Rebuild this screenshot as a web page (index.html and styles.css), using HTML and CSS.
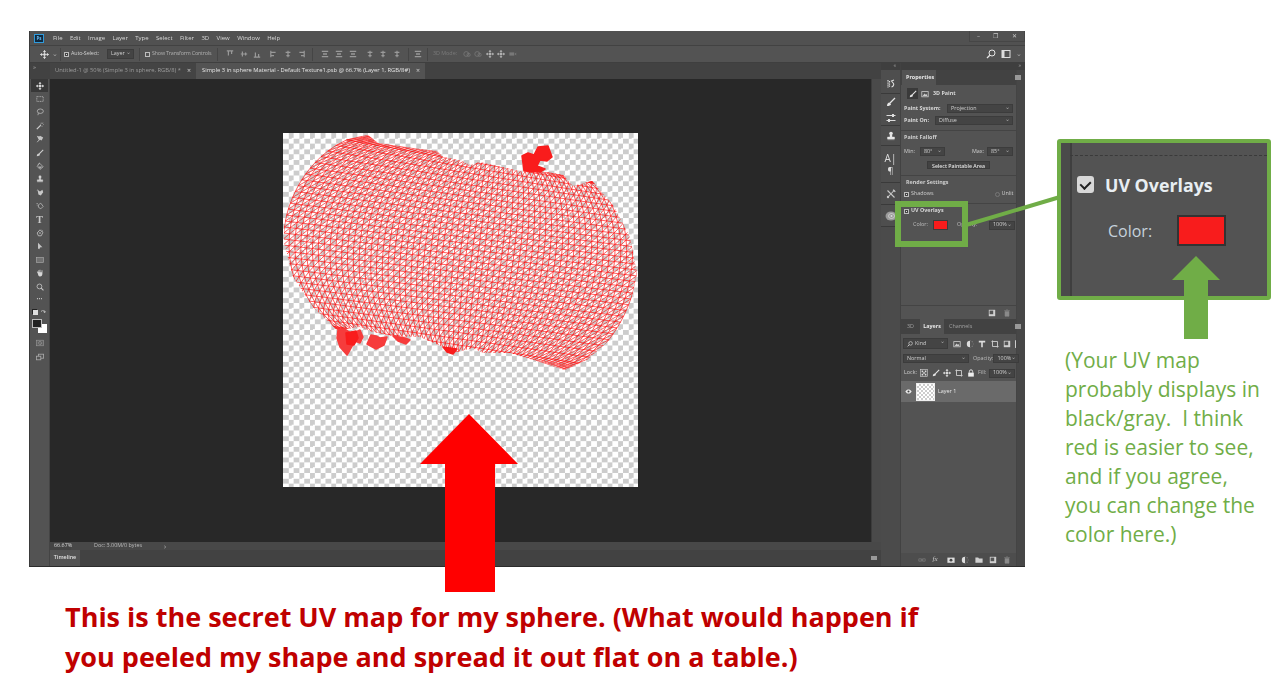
FILE: index.html
```html
<!DOCTYPE html>
<html lang="en">
<head>
<meta charset="utf-8">
<title>Secret UV map</title>
<link rel="stylesheet" href="styles.css">
</head>
<body>
<svg class="defs" aria-hidden="true">
  <symbol id="i-move" viewBox="0 0 10 10"><path d="M5 .5v9M.5 5h9M5 .5 3.8 2h2.4zM5 9.5 3.8 8h2.4zM.5 5 2 3.8v2.4zM9.5 5 8 3.8v2.4z" fill="#e0e0e0" stroke="#e0e0e0" stroke-width=".8"/><rect x="3.8" y="3.8" width="2.4" height="2.4" fill="#e0e0e0"/></symbol>
  <symbol id="i-marquee" viewBox="0 0 10 10"><rect x="1" y="2" width="8" height="6" fill="none" stroke="#ccc" stroke-dasharray="1.3 .8"/></symbol>
  <symbol id="i-lasso" viewBox="0 0 10 10"><ellipse cx="5.4" cy="4" rx="3.8" ry="2.8" fill="none" stroke="#ccc"/><path d="M3 6.5 2.4 9" stroke="#ccc" fill="none"/></symbol>
  <symbol id="i-wand" viewBox="0 0 10 10"><path d="M1 9 6 4" stroke="#e4e4e4" stroke-width="1.5"/><path d="M7.5 .5v2M7.5 4.5v1.5M5 3h1M9 3h1M5.5 1l.8.8M9 1l-.8.8" stroke="#ddd" stroke-width=".7"/></symbol>
  <symbol id="i-heal" viewBox="0 0 10 10"><path d="M1 1l3 1 1-1 4 2-2 4-2-1-1 1z" fill="#d8d8d8"/><path d="M4 6 1.5 9" stroke="#ddd"/></symbol>
  <symbol id="i-brush" viewBox="0 0 10 10"><path d="M9 1 4 6" stroke="#e6e6e6" stroke-width="1.3"/><path d="M1 9c0-2 1-3.500 2.500-3.500L5 7c0 1.500-2 2-4 2z" fill="#e6e6e6"/></symbol>
  <symbol id="i-bucket" viewBox="0 0 10 10"><path d="M4.500 1.500 9 6 5 9.200 1.500 5.500z" fill="none" stroke="#ccc"/><path d="M2 3.500 5 1" stroke="#ccc"/><path d="M2.500 5.500h5.500L5 8.500z" fill="#bbb"/></symbol>
  <symbol id="i-stamp" viewBox="0 0 10 10"><circle cx="5" cy="2.500" r="1.800" fill="#e6e6e6"/><path d="M4 4h2v2H4zM1.500 6h7v2h-7zM1.500 8.700h7" fill="#e6e6e6" stroke="#e6e6e6" stroke-width=".4"/></symbol>
  <symbol id="i-mix" viewBox="0 0 10 10"><path d="M2 1l3 2 3-2 1 3-3 4-3-1z" fill="#ddd"/><path d="M1 2h1M2 .5v1" stroke="#ddd" stroke-width=".6"/></symbol>
  <symbol id="i-smudge" viewBox="0 0 10 10"><path d="M3 3.500 6 1.500l3 4-3 3-3-2z" fill="none" stroke="#ccc"/><path d="M.5 2h2M1 4h1" stroke="#ccc" stroke-width=".8"/></symbol>
  <symbol id="i-pen" viewBox="0 0 10 10"><path d="M5 1 8.500 4.500 6.500 8.500H3L1.500 5z" fill="none" stroke="#ddd"/><circle cx="5" cy="5" r="1" fill="#ddd"/><path d="M7 1.500 8.800 3.200" stroke="#ddd"/></symbol>
  <symbol id="i-arrow" viewBox="0 0 10 10"><path d="M2.500 1 8 6.500H5.500L4 9 2.500 8z" fill="#d8d8d8"/></symbol>
  <symbol id="i-rect" viewBox="0 0 10 10"><rect x=".8" y="2" width="8.400" height="6" fill="#777" stroke="#bbb" stroke-width=".8"/></symbol>
  <symbol id="i-hand" viewBox="0 0 10 10"><path d="M2 5 1 3.500l1-.5 1 1V1.500h1V4h.5V1h1v3H7V1.500h1V6c0 2-1 3.500-3 3.500S3 8 2 5z" fill="#eee"/></symbol>
  <symbol id="i-zoom" viewBox="0 0 10 10"><circle cx="4.300" cy="4.300" r="3" fill="none" stroke="#ddd"/><path d="M6.500 6.500 9.300 9.300" stroke="#ddd" stroke-width="1.300"/></symbol>
  <symbol id="i-mask" viewBox="0 0 10 10"><rect x=".5" y="1.500" width="9" height="7" fill="#666" stroke="#aaa" stroke-width=".7"/><circle cx="5" cy="5" r="1.800" fill="none" stroke="#bbb" stroke-dasharray="1 .6"/></symbol>
  <symbol id="i-screen" viewBox="0 0 10 10"><rect x="3" y="1.500" width="6.500" height="5" fill="none" stroke="#bbb"/><rect x=".5" y="4" width="5.500" height="4.500" fill="#555" stroke="#bbb"/></symbol>
  <symbol id="i-al-t" viewBox="0 0 10 10"><path d="M1 1h8M3 1v6M7 1v4" stroke="#999" stroke-width="1.500"/></symbol>
  <symbol id="i-al-m" viewBox="0 0 10 10"><path d="M1 5h8M3 2v6M7 3v4" stroke="#999" stroke-width="1.500"/></symbol>
  <symbol id="i-al-b" viewBox="0 0 10 10"><path d="M1 9h8M3 3v6M7 5v4" stroke="#999" stroke-width="1.500"/></symbol>
  <symbol id="i-al-l" viewBox="0 0 10 10"><path d="M1 1v8M1 3h6M1 7h4" stroke="#999" stroke-width="1.500"/></symbol>
  <symbol id="i-al-c" viewBox="0 0 10 10"><path d="M5 1v8M2 3h6M3 7h4" stroke="#999" stroke-width="1.500"/></symbol>
  <symbol id="i-al-r" viewBox="0 0 10 10"><path d="M9 1v8M3 3h6M5 7h4" stroke="#999" stroke-width="1.500"/></symbol>
  <symbol id="i-dist" viewBox="0 0 10 10"><path d="M1 1h8v1.500H1zM1 7.500h8V9H1zM2.500 4h5v2h-5z" fill="#999"/></symbol>
  <symbol id="i-rot" viewBox="0 0 10 10"><circle cx="4" cy="5" r="3" fill="none" stroke="#888"/><circle cx="7" cy="6" r="2" fill="none" stroke="#888"/></symbol>
  <symbol id="i-cam" viewBox="0 0 10 10"><rect x=".5" y="3" width="6" height="4" fill="#888"/><path d="M7 5l2-2v4z" fill="#888"/></symbol>
  <symbol id="i-search" viewBox="0 0 10 10"><circle cx="6" cy="4" r="3" fill="none" stroke="#e6e6e6"/><path d="M3.800 6.200 1 9" stroke="#e6e6e6" stroke-width="1.300"/></symbol>
  <symbol id="i-work" viewBox="0 0 10 10"><rect x="1" y="1.500" width="8" height="7" fill="none" stroke="#ddd"/><rect x="1" y="1.500" width="2.500" height="7" fill="#ddd"/></symbol>
  <symbol id="i-image" viewBox="0 0 10 10"><rect x="1" y="2" width="8" height="6.500" fill="none" stroke="#ccc"/><path d="M2 7.500 4.500 4.500 6 6l1-1 1 2.500z" fill="#ccc"/></symbol>
  <symbol id="i-hist" viewBox="0 0 10 10"><path d="M2 1v8M3.500 2v6" stroke="#ddd" stroke-dasharray="1 .6" stroke-width="1.200"/><path d="M8 1 5.500 2l2 2.500c.8 1.500-.5 3-2 3.500" fill="none" stroke="#ddd" stroke-width="1.100"/></symbol>
  <symbol id="i-sliders" viewBox="0 0 10 10"><path d="M.5 2.500h9M.5 7.500h9" stroke="#ddd"/><rect x="6" y="1" width="2" height="3" fill="#ddd"/><rect x="2" y="6" width="2" height="3" fill="#ddd"/></symbol>
  <symbol id="i-tools" viewBox="0 0 10 10"><path d="M1.500 1.500 8.500 8.500M8.500 1 2.500 7.500" stroke="#c8c8c8" stroke-width="1.100"/><circle cx="2" cy="8" r="1.200" fill="#c8c8c8"/><path d="M7 .8 9.300 2.800" stroke="#c8c8c8" stroke-width="1.200"/></symbol>
  <symbol id="i-sphere" viewBox="0 0 12 10"><ellipse cx="6" cy="5" rx="5.500" ry="4.500" fill="#9a9a9a"/><ellipse cx="6.500" cy="5" rx="3" ry="2.500" fill="none" stroke="#ddd" stroke-width=".7"/><circle cx="6.500" cy="5" r="1" fill="#ddd"/></symbol>
  <symbol id="i-trash" viewBox="0 0 10 10"><path d="M2.500 3h5v6h-5zM1.500 2h7M4 1h2" fill="#8a8a8a" stroke="#8a8a8a" stroke-width=".7"/></symbol>
  <symbol id="i-new" viewBox="0 0 10 10"><rect x="1" y="1" width="8" height="8" fill="#d0d0d0"/><rect x="2" y="2" width="4.500" height="4.500" fill="#555"/></symbol>
  <symbol id="i-adj" viewBox="0 0 10 10"><circle cx="5" cy="5" r="4" fill="#ddd"/><path d="M5 1a4 4 0 0 1 0 8z" fill="#555"/></symbol>
  <symbol id="i-folder" viewBox="0 0 10 10"><path d="M.5 2h3.500l1 1h4.500v5.500H.5z" fill="#d0d0d0"/></symbol>
  <symbol id="i-maskb" viewBox="0 0 10 10"><rect x=".5" y="2" width="9" height="6.500" fill="#ddd"/><circle cx="5" cy="5.200" r="1.800" fill="#444"/></symbol>
  <symbol id="i-link" viewBox="0 0 10 10"><path d="M1 3.500h3.500v3H1zM5.500 3.500H9v3H5.500zM3 5h4" fill="none" stroke="#777"/></symbol>
  <symbol id="i-type" viewBox="0 0 10 10"><path d="M1 1h8v2H6v6H4V3H1z" fill="#ddd"/></symbol>
  <symbol id="i-crop" viewBox="0 0 10 10"><rect x="2" y="2" width="6" height="6" fill="none" stroke="#ddd" stroke-width="1"/><path d="M.5 2h1.500M8 8h1.500M2 .5V2M8 8v1.500" stroke="#ddd"/></symbol>
  <symbol id="i-lock" viewBox="0 0 10 10"><rect x="1.500" y="4.500" width="7" height="5" fill="#eee"/><path d="M3 4.500V3a2 2 0 0 1 4 0v1.500" fill="none" stroke="#eee" stroke-width="1.100"/></symbol>
  <symbol id="i-eye" viewBox="0 0 10 10"><path d="M.5 5C2 2.800 3.500 2 5 2s3 .8 4.500 3C8 7.200 6.500 8 5 8S2 7.200.5 5z" fill="#eee"/><circle cx="5" cy="5" r="1.500" fill="#444"/></symbol>
  <symbol id="i-checker" viewBox="0 0 10 10"><rect x=".5" y=".5" width="9" height="9" fill="#555" stroke="#ddd" stroke-width=".7"/><path d="M2 2h2v2H2zM6 2h2v2H6zM4 4h2v2H4zM2 6h2v2H2zM6 6h2v2H6z" fill="#ddd"/></symbol>
</svg>

<main class="page">
  <div class="ps">
    <header class="menubar">
      <span class="logo">Ps</span>
      <nav class="menus">
        <span>File</span><span>Edit</span><span>Image</span><span>Layer</span><span>Type</span><span>Select</span><span>Filter</span><span>3D</span><span>View</span><span>Window</span><span>Help</span>
      </nav>
      <div class="winbtns"><span class="winbtn">&#8211;</span><span class="winbtn">&#10064;</span><span class="winbtn wide">&#10005;</span></div>
    </header>

    <div class="options">
      <svg class="ic opt-move"><use href="#i-move"/></svg>
      <span class="chev opt-chev">&#8964;</span>
      <span class="vsep first"></span>
      <span class="chk on opt-chk"></span>
      <span class="opt-label auto">Auto-Select:</span>
      <span class="field opt-layer">Layer<i>&#8964;</i></span>
      <span class="vsep"></span>
      <span class="chk opt-chk"></span>
      <span class="opt-label dim show">Show Transform Controls</span>
      <span class="vsep"></span>
      <div class="opt-icons">
        <svg class="ic"><use href="#i-al-t"/></svg><svg class="ic"><use href="#i-al-m"/></svg><svg class="ic"><use href="#i-al-b"/></svg>
        <svg class="ic gapl"><use href="#i-al-l"/></svg><svg class="ic"><use href="#i-al-c"/></svg><svg class="ic"><use href="#i-al-r"/></svg>
      </div>
      <span class="vsep"></span>
      <div class="opt-icons">
        <svg class="ic"><use href="#i-dist"/></svg><svg class="ic"><use href="#i-dist"/></svg><svg class="ic"><use href="#i-dist"/></svg>
        <svg class="ic gapl"><use href="#i-al-c"/></svg><svg class="ic"><use href="#i-al-c"/></svg><svg class="ic"><use href="#i-al-c"/></svg>
      </div>
      <span class="vsep"></span>
      <svg class="ic"><use href="#i-dist"/></svg>
      <span class="vsep"></span>
      <span class="opt-label dim mode3d">3D Mode:</span>
      <div class="opt-icons tight">
        <svg class="ic"><use href="#i-rot"/></svg><svg class="ic"><use href="#i-rot"/></svg><svg class="ic"><use href="#i-move"/></svg><svg class="ic"><use href="#i-move"/></svg><svg class="ic"><use href="#i-cam"/></svg>
      </div>
      <div class="opt-right">
        <svg class="ic big"><use href="#i-search"/></svg>
        <svg class="ic big"><use href="#i-work"/></svg>
        <span class="chev">&#8964;</span>
      </div>
    </div>

    <div class="body">
      <div class="left">
        <div class="tabrow">
          <span class="grip">&#187;</span>
          <span class="doctab"><b>Untitled-1 @ 50% (Simple 3 in sphere, RGB/8) *</b><em>&#215;</em></span>
          <span class="doctab active"><b>Simple 3 in sphere Material - Default Texture1.psb @ 66.7% (Layer 1, RGB/8#)</b><em>&#215;</em></span>
        </div>
        <div class="work">
          <aside class="toolbar">
            <span class="tool active"><svg class="ic"><use href="#i-move"/></svg></span>
            <span class="tool"><svg class="ic"><use href="#i-marquee"/></svg></span>
            <span class="tool"><svg class="ic"><use href="#i-lasso"/></svg></span>
            <span class="tool"><svg class="ic"><use href="#i-wand"/></svg></span>
            <span class="tool"><svg class="ic"><use href="#i-heal"/></svg></span>
            <span class="tool"><svg class="ic"><use href="#i-brush"/></svg></span>
            <span class="tool"><svg class="ic"><use href="#i-bucket"/></svg></span>
            <span class="tool"><svg class="ic"><use href="#i-stamp"/></svg></span>
            <span class="tool"><svg class="ic"><use href="#i-mix"/></svg></span>
            <span class="tool"><svg class="ic"><use href="#i-smudge"/></svg></span>
            <span class="tool tool-t">T</span>
            <span class="tool"><svg class="ic"><use href="#i-pen"/></svg></span>
            <span class="tool"><svg class="ic"><use href="#i-arrow"/></svg></span>
            <span class="tool"><svg class="ic"><use href="#i-rect"/></svg></span>
            <span class="tool"><svg class="ic"><use href="#i-hand"/></svg></span>
            <span class="tool"><svg class="ic"><use href="#i-zoom"/></svg></span>
            <span class="tool tool-dots">&#8226;&#8226;&#8226;</span>
            <div class="swaps"><span class="mini-b"></span><span class="mini-a">&#8631;</span></div>
            <div class="colors"><span class="bgc"></span><span class="fgc"></span></div>
            <span class="tool low"><svg class="ic"><use href="#i-mask"/></svg></span>
            <span class="tool"><svg class="ic"><use href="#i-screen"/></svg></span>
          </aside>
          <div class="center">
            <div class="canvas-row">
              <div class="canvas">
                <div class="doc">
                  <svg class="mesh" viewBox="283 133 355 354" width="355" height="354">
                    <defs>
                      <clipPath id="mesh-clip">
                        <path d="M284 227 287 203 300 173 323 147 347 137 368 135 378 143 420 149 437 151 443 157 462 161 470 165 480 162 523 172 547 172 563 175 573 186 592 181 613 205 630 237 637 273 630 307 613 337 587 360 565 370 540 362 510 353 483 353 473 348 453 353 443 347 420 337 393 336 370 331 360 327 337 330 313 307 293 277 284 243Z"/>
                      </clipPath>
                    </defs>
                    <g clip-path="url(#mesh-clip)"><path id="mesh-lines" class="mesh-lines"/></g>
                    <path class="blob" d="M524 171 522 156 528 153 534 155 538 147 548 146 552 157 547 161 540 160 537 166 545 169 540 172Z"/>
                    <path class="blob soft" d="M338 330 345 329 352 334 360 330 363 337 360 343 355 341 350 350 347 355 340 347 337 338Z"/>
                    <path class="blob" d="M346 333 356 331 358 338 354 345 347 344Z"/>
                    <path class="blob soft" d="M367 344 371 335 376 336 380 338 387 337 384 345 376 349Z"/>
                    <path class="blob soft" d="M393 336 405 338 410 340 406 344 398 341Z"/>
                    <path class="blob" d="M443 347 457 349 453 354 447 352Z"/>
                  </svg>
                </div>
              </div>
              <div class="vscroll"></div>
            </div>
            <div class="status"><span class="zoomval">66.67%</span><span class="docinfo">Doc: 3.00M/0 bytes</span><span class="more">&#8250;</span></div>
            <div class="timeline"><span class="tl-tab">Timeline</span><span class="tl-menu"></span></div>
          </div>
        </div>
      </div>

      <aside class="dock">
        <div class="dock-top">&#171;</div>
        <div class="dgroup g1"><svg class="ic big"><use href="#i-hist"/></svg></div>
        <div class="dgroup g2"><svg class="ic big"><use href="#i-brush"/></svg><svg class="ic big"><use href="#i-sliders"/></svg></div>
        <div class="dgroup g3"><svg class="ic big"><use href="#i-stamp"/></svg></div>
        <div class="dgroup g4"><span class="dA">A|</span><span class="dP">&#182;</span></div>
        <div class="dgroup g5"><svg class="ic big"><use href="#i-tools"/></svg></div>
        <div class="dgroup g6"><svg class="ic wider"><use href="#i-sphere"/></svg></div>
      </aside>

      <div class="panels">
        <div class="panel-top">&#187;</div>
        <section class="panel props">
          <div class="ptabs"><span class="ptab">Properties</span><span class="pmenu"></span></div>
          <div class="prow mode-row">
            <span class="brushbtn"><svg class="ic"><use href="#i-brush"/></svg></span>
            <svg class="ic img"><use href="#i-image"/></svg>
            <span class="strong">3D Paint</span>
          </div>
          <div class="prow r-sys"><span class="strong">Paint System:</span><span class="field f-sys">Projection<i>&#8964;</i></span></div>
          <div class="prow r-on"><span class="strong">Paint On:</span><span class="field f-on">Diffuse<i>&#8964;</i></span></div>
          <hr class="rule r1">
          <div class="ptitle">Paint Falloff</div>
          <div class="prow r-minmax">
            <span>Min:</span><span class="field f-min">80&#176;<i>&#8964;</i></span>
            <span class="maxl">Max:</span><span class="field f-max">85&#176;<i>&#8964;</i></span>
          </div>
          <button class="pbtn">Select Paintable Area</button>
          <hr class="rule r2">
          <div class="ptitle t2">Render Settings</div>
          <div class="prow r-sh"><span class="chk on"></span><span class="lab">Shadows</span><span class="radio"></span><span>Unlit</span></div>
          <hr class="rule r3">
          <div class="prow r-uv"><span class="chk on"></span><span class="strong lab">UV Overlays</span></div>
          <div class="prow r-col"><span class="collab">Color:</span><span class="swatch"></span><span class="oplab">Opacity:</span><span class="field f-op">100%<i>&#8964;</i></span></div>
          <div class="pfoot">
            <svg class="ic"><use href="#i-new"/></svg><svg class="ic"><use href="#i-trash"/></svg>
          </div>
        </section>
        <section class="panel layers">
          <div class="ptabs"><span class="ltab">3D</span><span class="ptab lt">Layers</span><span class="ltab ch">Channels</span><span class="pmenu"></span></div>
          <div class="prow r-filter">
            <span class="field f-kind"><svg class="ic tiny"><use href="#i-search"/></svg>Kind<i>&#8964;</i></span>
            <div class="licons">
              <svg class="ic"><use href="#i-image"/></svg><svg class="ic"><use href="#i-adj"/></svg><svg class="ic"><use href="#i-type"/></svg><svg class="ic"><use href="#i-crop"/></svg><svg class="ic"><use href="#i-new"/></svg>
            </div>
            <span class="toggle"></span>
          </div>
          <div class="prow r-blend"><span class="field f-blend">Normal<i>&#8964;</i></span><span class="oplab2">Opacity:</span><span class="field f-pct">100%<i>&#8964;</i></span></div>
          <div class="prow r-lock">
            <span class="locklab">Lock:</span>
            <div class="licons small">
              <svg class="ic"><use href="#i-checker"/></svg><svg class="ic"><use href="#i-brush"/></svg><svg class="ic"><use href="#i-move"/></svg><svg class="ic"><use href="#i-crop"/></svg><svg class="ic"><use href="#i-lock"/></svg>
            </div>
            <span class="filllab">Fill:</span><span class="field f-pct">100%<i>&#8964;</i></span>
          </div>
          <div class="layer-row">
            <svg class="ic eye"><use href="#i-eye"/></svg>
            <span class="thumb"></span>
            <span>Layer 1</span>
          </div>
          <div class="lfoot">
            <svg class="ic"><use href="#i-link"/></svg><span class="fx"><i>fx</i></span><svg class="ic"><use href="#i-maskb"/></svg><svg class="ic"><use href="#i-adj"/></svg><svg class="ic"><use href="#i-folder"/></svg><svg class="ic"><use href="#i-new"/></svg><svg class="ic"><use href="#i-trash"/></svg>
          </div>
        </section>
      </div>
    </div>
  </div>

  <p class="caption">This is the secret UV map for my sphere. (What would happen if<br>you peeled my shape and spread it out flat on a table.)</p>

  <div class="callout"></div>
  <div class="inset">
    <div class="inset-row"><span class="inset-chk"></span><span class="inset-title">UV Overlays</span></div>
    <div class="inset-color"><span class="inset-lab">Color:</span><span class="inset-swatch"></span></div>
  </div>
  <svg class="arrows" viewBox="0 0 1275 684" width="1275" height="684" aria-hidden="true">
    <path class="a-green-line" d="M966 225 1060 197"/>
    <path class="a-green" d="M1196 256 1220 280H1208V339H1184V280H1172Z"/>
    <path class="a-red" d="M469 414 518 464H495V592H445V464H420Z"/>
  </svg>
  <p class="note">(Your UV map<br>probably displays in<br>black/gray.&nbsp; I think<br>red is easier to see,<br>and if you agree,<br>you can change the<br>color here.)</p>
</main>
<script src="script.js"></script>
</body>
</html>
```

FILE: styles.css
```css
* { box-sizing: border-box; }
html, body { margin: 0; padding: 0; background: #fff; }
body { font-family: "Open Sans", "Liberation Sans", sans-serif; overflow: hidden; }
.defs { position: absolute; width: 0; height: 0; }
.page { position: relative; width: 1275px; height: 684px; overflow: hidden; padding: 31px 0 0 29px; }

/* Photoshop window */
.ps { width: 996px; height: 536px; background: #535353; color: #cfcfcf; display: flex; flex-direction: column; font-size: 5.4px; line-height: 1; filter: blur(.4px); border-left: 1px solid #3a3a3a; border-bottom: 1px solid #2c2c2c; }
.ic { width: 8px; height: 8px; display: block; flex: none; }
.ic.big { width: 10px; height: 10px; }
.ic.tiny { width: 6px; height: 6px; margin-right: 2px; }
.ic.wider { width: 12px; height: 10px; }

.menubar { height: 15px; flex: none; display: flex; align-items: center; padding-left: 4px; border-bottom: 1px solid #424242; background: #515151; }
.logo { width: 10px; height: 9px; border: 1px solid #2f9bdc; background: #10293f; color: #6bbcf0; font-size: 4.5px; font-weight: 700; display: flex; align-items: center; justify-content: center; }
.menus { display: flex; gap: 7.4px; margin-left: 9px; font-size: 6px; color: #d8d8d8; }
.winbtns { margin-left: auto; height: 11px; display: flex; border: 1px solid #464646; border-top: 0; margin-top: -4px; margin-right: 0; color: #c8c8c8; }
.winbtn { width: 17px; display: flex; align-items: center; justify-content: center; font-size: 6px; }
.winbtn.wide { width: 20px; }

.options { height: 17px; flex: none; display: flex; align-items: center; padding-left: 10px; background: #535353; border-bottom: 1px solid #3f3f3f; }
.opt-move { width: 9px; height: 9px; }
.chev { color: #aaa; font-size: 7px; line-height: 5px; height: 6px; }
.opt-chev { margin-left: 3px; }
.vsep { width: 1px; height: 13px; background: #454545; flex: none; margin: 0 5px; }
.vsep.first { margin: 0 3px 0 2px; }
.chk { width: 5px; height: 5px; border: 1px solid #bdbdbd; flex: none; display: block; }
.chk.on { background: #e0e0e0; box-shadow: inset 0 0 0 1px #444; }
.opt-label.auto { margin-left: 2px; width: 30px; white-space: nowrap; letter-spacing: -.15px; }
.opt-label.dim, .dim { color: #b0b0b0; }
.opt-label.show { margin-left: 2px; width: 60px; white-space: nowrap; letter-spacing: -.2px; }
.opt-label.mode3d { color: #7a7a7a; white-space: nowrap; width: 25px; }
.field { background: #444; border: 1px solid #3c3c3c; display: flex; align-items: center; padding-left: 3px; height: 9px; position: relative; color: #d0d0d0; white-space: nowrap; flex: none; }
.field i { position: absolute; right: 2px; top: 0; font-style: normal; font-size: 6px; color: #aaa; line-height: 5px; }
.opt-layer { width: 27px; height: 10px; margin-left: 6px; }
.opt-icons { display: flex; gap: 5.700px; align-items: center; margin: 0 2px 0 3px; }
.opt-icons .gapl { margin-left: 3px; }
.opt-icons.tight { margin-left: 5px; gap: 3.500px; opacity: .7; }
.opt-right { margin-left: auto; display: flex; align-items: center; gap: 5px; margin-right: 3px; }

.body { flex: 1; display: flex; min-height: 0; }
.left { width: 851px; display: flex; flex-direction: column; flex: none; }
.tabrow { height: 16px; flex: none; display: flex; background: #424242; }
.grip { width: 20px; font-size: 6px; color: #aaa; padding: 1px 0 0 3px; flex: none; }
.doctab { height: 16px; display: flex; align-items: center; padding-left: 5px; width: 146px; background: #444; color: #9c9c9c; position: relative; flex: none; white-space: nowrap; font-size: 5.8px; }
.doctab b { font-weight: 400; }
.doctab em { position: absolute; right: 5px; top: 4px; font-style: normal; font-size: 7px; color: #ccc; }
.doctab.active { width: 229px; background: #535353; color: #e6e6e6; padding-left: 6px; }
.work { flex: 1; display: flex; min-height: 0; }
.toolbar { width: 20px; flex: none; background: #535353; border-right: 1px solid #444; display: flex; flex-direction: column; align-items: center; padding-top: 0; }
.tool { height: 13.400px; width: 17px; display: flex; align-items: center; justify-content: center; flex: none; color: #ddd; opacity: .85; }
.tool.active { background: #383838; opacity: 1; }
.tool-t { font-family: "Liberation Serif", serif; font-size: 10px; font-weight: 700; }
.tool-dots { font-size: 5px; letter-spacing: .2px; color: #ddd; }
.swaps { height: 11px; width: 17px; display: flex; justify-content: space-between; align-items: center; padding: 0 2px; flex: none; }
.mini-b { width: 5px; height: 5px; background: #ddd; box-shadow: -1px -1px 0 #222; }
.mini-a { font-size: 6px; color: #ddd; }
.colors { position: relative; width: 15px; height: 14px; flex: none; margin-top: 1px; }
.bgc { position: absolute; right: 0; bottom: 0; width: 9px; height: 9px; background: #fff; }
.fgc { position: absolute; left: 0; top: 0; width: 10px; height: 9.500px; background: #222; border: 1px solid #bbb; }
.tool.low { margin-top: 4px; }
.center { flex: 1; display: flex; flex-direction: column; min-width: 0; }
.canvas-row { flex: 1; display: flex; min-height: 0; }
.canvas { flex: 1; background: #282828; display: flex; align-items: center; justify-content: center; padding-bottom: 1px; }
.doc { width: 355px; height: 354px; background-color: #fff; background-image: conic-gradient(#ccc 25%, #fff 0 50%, #ccc 0 75%, #fff 0); background-size: 10.640px 10.640px; }
.mesh { display: block; }
.mesh-lines { fill: none; stroke: #ff1010; stroke-width: .8; stroke-opacity: .85; }
.blob { fill: #f91c1c; stroke: #f91c1c; stroke-width: 1.500; stroke-linejoin: round; }
.blob.soft { fill: #f63c3c; stroke: #f63c3c; }
.vscroll { width: 10px; flex: none; background: #4a4a4a; border-left: 1px solid #3c3c3c; }
.status { height: 8px; flex: none; display: flex; align-items: center; background: #484848; color: #bcbcbc; padding-right: 8px; }
.zoomval { width: 21px; padding-left: 4px; height: 8px; display: flex; align-items: center; background: #444; color: #ddd; white-space: nowrap; flex: none; }
.docinfo { margin-left: 23px; width: 70px; white-space: nowrap; }
.more { font-size: 7px; }
.timeline { height: 16px; flex: none; display: flex; align-items: center; background: #424242; }
.tl-tab { width: 30px; height: 16px; background: #535353; color: #e4e4e4; display: flex; align-items: center; justify-content: center; font-weight: 600; }
.tl-menu { margin-left: auto; margin-right: 4px; width: 6px; height: 4px; background: #999; }

.dock { width: 20px; flex: none; background: #4b4b4b; display: flex; flex-direction: column; align-items: stretch; border-right: 1px solid #424242; }
.dock-top { height: 7px; background: #3f3f3f; font-size: 5px; color: #aaa; text-align: right; padding-right: 4px; }
.dgroup { display: flex; flex-direction: column; align-items: center; border-bottom: 1px solid #3a3a3a; background: #4e4e4e; }
.g1 { height: 24px; justify-content: center; padding-top: 4px; }
.g2 { height: 32px; gap: 6px; justify-content: center; }
.g3 { height: 20px; justify-content: center; }
.g4 { height: 37px; justify-content: center; gap: 3px; }
.g5 { height: 22px; justify-content: center; }
.g6 { height: 22px; justify-content: center; }
.dA { font-size: 10px; color: #ddd; }
.dP { font-size: 9px; color: #ddd; }

.panels { flex: 1; display: flex; flex-direction: column; min-width: 0; background: #474747; }
.panel-top { height: 7px; flex: none; background: #3f3f3f; font-size: 5px; color: #aaa; text-align: right; padding-right: 4px; }
.panel { display: flex; flex-direction: column; width: 116px; background: #535353; border-right: 1px solid #444; }
.props { height: 249px; flex: none; }
.layers { flex: 1; }
.ptabs { height: 15px; flex: none; background: #424242; display: flex; align-items: stretch; padding-left: 1px; position: relative; }
.ptab { background: #535353; display: flex; align-items: center; padding: 0 4px; color: #e8e8e8; font-weight: 700; width: 34px; white-space: nowrap; }
.pmenu { position: absolute; right: -5px; top: 5px; width: 6px; height: 5px; background: #999; }
.prow { display: flex; align-items: center; padding-left: 3px; flex: none; white-space: nowrap; }
.strong { font-weight: 700; color: #d8d8d8; }
.mode-row { height: 11px; margin-top: 3px; padding-left: 6px; }
.brushbtn { width: 11px; height: 11px; background: #3a3a3a; display: flex; align-items: center; justify-content: center; }
.img { margin-left: 3px; }
.mode-row .strong { margin-left: 4px; }
.r-sys { height: 9px; margin-top: 5px; }
.f-sys { width: 66px; margin-left: auto; margin-right: 3px; }
.r-on { height: 9px; margin-top: 3px; }
.f-on { width: 78px; margin-left: auto; margin-right: 3px; }
.rule { border: 0; border-top: 1px solid #444; margin: 0; flex: none; }
.r1 { margin-top: 5px; }
.ptitle { height: 10px; margin-top: 2px; padding-left: 3px; font-weight: 700; display: flex; align-items: center; flex: none; }
.t2 { padding-left: 5px; }
.r-minmax { height: 9px; margin-top: 4px; }
.f-min { width: 25px; margin-left: 5px; }
.maxl { margin-left: auto; }
.f-max { width: 26px; margin-left: 3px; margin-right: 3px; }
.pbtn { display: block; width: 63px; height: 8px; margin: 5px 0 0 26px; padding: 0; background: #424242; border: 1px solid #3a3a3a; color: #e0e0e0; font: 600 5.200px "Open Sans", sans-serif; flex: none; white-space: nowrap; }
.r2 { margin-top: 6px; }
.r-sh { height: 8px; margin-top: 2px; }
.lab { margin-left: 2px; }
.radio { width: 5px; height: 5px; border: 1px solid #777; border-radius: 50%; margin-left: 61px; margin-right: 2px; }
.r3 { margin-top: 5px; }
.r-uv { height: 8px; margin-top: 3px; }
.r-col { height: 10px; margin-top: 5px; }
.collab { margin-left: 9px; width: 20px; color: #bdbdbd; }
.swatch { width: 15px; height: 10px; background: #f81c1c; border: 1px solid #3c3c3c; }
.oplab { margin-left: 9px; width: 32px; color: #bdbdbd; }
.f-op { width: 26px; }
.pfoot { margin-top: auto; height: 14px; flex: none; display: flex; align-items: center; justify-content: flex-end; gap: 7px; padding-right: 5px; border-top: 1px solid #444; }

.ltab { display: flex; align-items: center; color: #a0a0a0; padding: 0 5px 0 5px; width: 18px; }
.ptab.lt { width: 24px; justify-content: center; padding: 0; }
.ltab.ch { width: 36px; }
.r-filter { height: 11px; margin-top: 4px; padding-left: 2px; }
.f-kind { width: 45px; height: 11px; }
.licons { display: flex; align-items: center; gap: 4.600px; margin-left: 5px; }
.toggle { width: 3px; height: 8px; background: #ccc; border-radius: 2px; margin-left: 4px; }
.r-blend { height: 9px; margin-top: 5px; padding-left: 2px; }
.f-blend { width: 66px; }
.oplab2 { margin-left: 4px; width: 22px; color: #bdbdbd; }
.f-pct { width: 26px; }
.r-lock { height: 10px; margin-top: 5px; }
.locklab { width: 16px; }
.licons.small { gap: 3.700px; margin-left: 0; width: 58px; }
.filllab { width: 11px; margin-left: 0; color: #bdbdbd; }
.layer-row { height: 21px; margin-top: 3px; flex: none; background: #6a6a6a; display: flex; align-items: center; padding-left: 4px; gap: 3px; color: #e8e8e8; }
.eye { width: 7px; height: 7px; margin-right: 1px; }
.thumb { width: 19px; height: 18px; border: 1px solid #eee; background-color: #fff; background-image: conic-gradient(#ccc 25%, #fff 0 50%, #ccc 0 75%, #fff 0); background-size: 4px 4px; }
.lfoot { margin-top: auto; height: 13px; flex: none; display: flex; align-items: center; justify-content: flex-end; gap: 6.100px; padding-right: 5px; background: #4d4d4d; }
.fx { width: 8px; color: #ccc; font-size: 7px; font-family: "Liberation Serif", serif; }

/* annotations */
.caption { margin: 30px 0 0 36px; color: #c00000; font-size: 27px; font-weight: 700; line-height: 40px; white-space: nowrap; }
.note { position: absolute; left: 1065px; top: 346px; margin: 0; color: #70ad47; font-size: 21px; line-height: 29px; white-space: nowrap; }
.callout { position: absolute; left: 895px; top: 201px; width: 73px; height: 46px; border: 6px solid #70ad47; }
.inset { position: absolute; left: 1057px; top: 139px; width: 214px; height: 161px; background: #535353; border: 4px solid #70ad47; border-radius: 3px; padding: 32px 0 0 16px; color: #ddd; }
.inset::before { content: ""; position: absolute; left: 0; top: 0; bottom: 0; width: 9px; border-right: 2px solid #3f3f3f; background: #4a4a4a; }
.inset::after { content: ""; position: absolute; left: 9px; right: 0; top: 12px; border-top: 1px dashed #3a3a3a; }
.inset-row { display: flex; align-items: center; height: 18px; }
.inset-chk { width: 17px; height: 17px; border-radius: 3px; background: #d8d8d8; position: relative; flex: none; }
.inset-chk::after { content: ""; position: absolute; left: 5px; top: 3px; width: 5px; height: 8px; border: solid #222; border-width: 0 2px 2px 0; transform: rotate(45deg); }
.inset-title { margin-left: 11px; font-size: 17.800px; font-weight: 700; color: #e8eef2; line-height: 18px; position: relative; top: 1px; }
.inset-color { display: flex; align-items: center; margin: 22px 0 0 31px; }
.inset-lab { width: 69px; font-size: 16px; color: #c6d2dc; }
.inset-swatch { width: 49px; height: 31px; background: #f81c1c; border: 2px solid #333; flex: none; }
.arrows { position: absolute; left: 0; top: 0; pointer-events: none; }
.a-green { fill: #70ad47; }
.a-green-line { stroke: #70ad47; stroke-width: 4; fill: none; }
.a-red { fill: #ff0000; }
```

FILE: script.js
```js
// Builds the warped triangle mesh of the UV map.
(function () {
  var TL = [368, 135], TR = [592, 181], BL = [345, 332], BR = [565, 370];
  var LO = [-72.5, -3.5], RO = [58.5, -2.5];
  var NU = 60, NV = 33;
  function side(a, b, o, t) {
    var k = Math.pow(Math.max(0, 1 - Math.pow(2 * t - 1, 2)), 0.58);
    return [a[0] + (b[0] - a[0]) * t + o[0] * k, a[1] + (b[1] - a[1]) * t + o[1] * k];
  }
  function P(i, j) {
    var v = j / NV, u = i / NU;
    var l = side(TL, BL, LO, v), r = side(TR, BR, RO, v);
    return (l[0] * (1 - u) + r[0] * u).toFixed(1) + ' ' + (l[1] * (1 - u) + r[1] * u).toFixed(1);
  }
  var d = [], i, j;
  for (i = 0; i <= NU; i++) {
    var a = ['M' + P(i, 0)];
    for (j = 1; j <= NV; j++) a.push('L' + P(i, j));
    d.push(a.join(''));
  }
  for (j = 0; j <= NV; j++) d.push('M' + P(0, j) + 'L' + P(NU, j));
  for (i = 0; i < NU; i++) {
    for (j = 0; j < NV; j++) d.push('M' + P(i + 1, j) + 'L' + P(i, j + 1));
  }
  document.getElementById('mesh-lines').setAttribute('d', d.join(''));
})();
```
